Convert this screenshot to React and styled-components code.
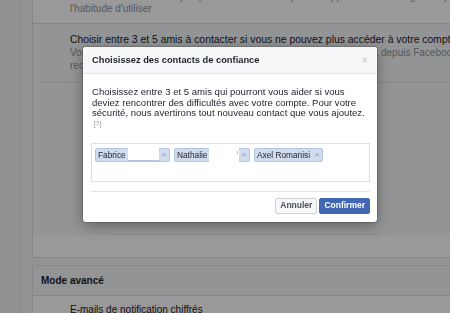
import React from "react"
import styled, { createGlobalStyle } from "styled-components"

const GlobalStyle = createGlobalStyle`
  html, body {
    margin: 0;
    padding: 0;
    width: 450px;
    height: 313px;
    overflow: hidden;
    background: #f5f6f7;
    font-family: "Liberation Sans", Arial, sans-serif;
  }
`

const Page = styled.div`
  display: flex;
  width: 450px;
  height: 313px;
  overflow: hidden;
`

const Sidebar = styled.div`
  width: 20px;
  flex: none;
  border-right: 1px solid #dddfe2;
  background: #f3f4f6;
`

const Main = styled.div`
  flex: 1;
  display: flex;
  flex-direction: column;
  gap: 7px;
  padding-left: 11px;
  min-width: 0;
`

const Card = styled.div`
  flex: none;
  background: #fff;
  border: 1px solid #dddfe2;
  border-right: none;
  border-radius: ${(p) => (p.$top ? "3px 0 0 0" : "0 0 0 3px")};
  margin-top: ${(p) => p.$offset || 0}px;
  overflow: hidden;
`

const Row = styled.div`
  padding: ${(p) => p.$pad || "2px 0 8px 37px"};
  background: ${(p) => (p.$active ? "#f6f7f9" : "#fff")};
  border-top: ${(p) => (p.$divided ? "1px solid #dddfe2" : "none")};
`

const RowText = styled.div`
  padding-left: 37px;
`

const Line = styled.div`
  white-space: nowrap;
  font-size: ${(p) => p.$size || 10}px;
  line-height: ${(p) => p.$lh || 12}px;
  color: ${(p) => (p.$muted ? "#90949c" : "#1d2129")};
`

const Divider = styled.div`
  height: 1px;
  background: #dddfe2;
  margin: ${(p) => p.$margin};
`

const CardHeader = styled.div`
  height: 29px;
  display: flex;
  align-items: center;
  padding-left: 8px;
  background: #f6f7f9;
  border-bottom: 1px solid #dddfe2;
  font-size: 10px;
  font-weight: bold;
  color: #1d2129;
`

const Overlay = styled.div`
  position: fixed;
  inset: 0;
  background: rgba(0, 0, 0, 0.4);
`

const Dialog = styled.div`
  position: absolute;
  left: 83px;
  top: 47px;
  width: 294px;
  background: #fff;
  border-radius: 3px;
  box-shadow: 0 0 0 1px rgba(0, 0, 0, 0.15), 0 3px 14px rgba(0, 0, 0, 0.35);
  overflow: hidden;
`

const DialogHeader = styled.div`
  height: 26px;
  display: flex;
  align-items: center;
  justify-content: space-between;
  padding: 0 9px;
  background: #f6f7f9;
  border-bottom: 1px solid #e5e5e5;
`

const Title = styled.div`
  font-size: 9.3px;
  font-weight: bold;
  color: #1d2129;
`

const Close = styled.span`
  font-size: 11px;
  color: #bec2c9;
  line-height: 1;
`

const Body = styled.div`
  padding: 13px 8px 0 9px;
`

const Text = styled.p`
  margin: 0;
  font-size: 9.55px;
  line-height: 10.5px;
  color: #1d2129;
  white-space: nowrap;
`

const Help = styled.div`
  font-size: 6.5px;
  line-height: 10px;
  color: #90949c;
  margin-left: 2px;
`

const TokenBox = styled.div`
  box-sizing: border-box;
  margin: 14px -1px 0 -1px;
  height: 39px;
  border: 1px solid #dddfe2;
  padding: 4px 3px;
  display: flex;
  align-items: flex-start;
  gap: 4px;
`

const Token = styled.div`
  height: 12px;
  display: flex;
  align-items: center;
  background: #d1dbee;
  border: 1px solid #b4c3df;
  border-radius: 2px;
  font-size: 8.3px;
  color: #1d2129;
`

const TokenLabel = styled.span`
  padding: 0 2px;
  width: ${(p) => (p.$w ? `${p.$w}px` : "auto")};
  box-sizing: border-box;
  white-space: nowrap;
  overflow: hidden;
`

const Ghost = styled.span`
  width: ${(p) => (p.$tall ? 30 : 31)}px;
  height: ${(p) => (p.$tall ? 17 : 12)}px;
  margin-top: ${(p) => (p.$tall ? -2 : -1)}px;
  align-self: flex-start;
  background: #fff;
  border-bottom: ${(p) => (p.$tall ? "none" : "1px solid #b4c3df")};
  position: relative;
`

const Tick = styled.span`
  position: absolute;
  right: 1px;
  top: 4px;
  width: 1px;
  height: 3px;
  background: #b8bcc4;
`

const Remove = styled.span`
  width: 10px;
  text-align: center;
  font-size: 8px;
  color: #8f9bb3;
`

const Footer = styled.div`
  margin: 9px -1px 0 -1px;
  border-top: 1px solid #e5e5e5;
  padding: 6px 0 8px;
  display: flex;
  justify-content: flex-end;
  gap: 2px;
`

const Button = styled.button`
  height: 16px;
  padding: 0 4px;
  border-radius: 2px;
  font-family: "Liberation Sans", Arial, sans-serif;
  font-size: 8.5px;
  font-weight: bold;
  line-height: 1;
  border: 1px solid ${(p) => (p.$primary ? "#4267b2" : "#ced0d4")};
  background: ${(p) => (p.$primary ? "#4267b2" : "#f6f7f9")};
  color: ${(p) => (p.$primary ? "#fff" : "#4b4f56")};
`

const contacts = [
  { name: "Fabrice", w: 32, ghost: true },
  { name: "Nathalie", w: 34, ghost: true, tall: true },
  { name: "Axel Romanisi" },
]

export default function App() {
  return (
    <>
      <GlobalStyle />
      <Page>
        <Sidebar />
        <Main>
          <Card $offset={-12}>
            <Row>
              <Line $muted>
                Nous vous avertirons si quelqu'un se connecte depuis un appareil ou un navigateur que vous n'avez pas
              </Line>
              <Line $muted>l'habitude d'utiliser</Line>
            </Row>
            <Row $active $divided $pad="9px 0 0 0">
              <RowText>
                <Line $lh={13} $size={10.4}>
                  Choisir entre 3 et 5 amis à contacter si vous ne pouvez plus accéder à votre compte
                </Line>
                <Line $muted $lh={13}>
                  Vos contacts de confiance peuvent vous envoyer un code et une URL depuis Facebook pour vous aider à vous
                </Line>
                <Line $muted $lh={13}>reconnecter.</Line>
              </RowText>
              <Divider $margin="10px 0 0 8px" />
              <Divider $margin="151px 72px 22px 82px" />
            </Row>
          </Card>
          <Card $top>
            <CardHeader>Mode avancé</CardHeader>
            <Row $pad="8px 0 8px 37px">
              <Line>E-mails de notification chiffrés</Line>
            </Row>
          </Card>
        </Main>
      </Page>
      <Overlay />
      <Dialog>
        <DialogHeader>
          <Title>Choisissez des contacts de confiance</Title>
          <Close>×</Close>
        </DialogHeader>
        <Body>
          <Text>
            Choisissez entre 3 et 5 amis qui pourront vous aider si vous
            <br />
            deviez rencontrer des difficultés avec votre compte. Pour votre
            <br />
            sécurité, nous avertirons tout nouveau contact que vous ajoutez.
          </Text>
          <Help>[?]</Help>
          <TokenBox>
            {contacts.map((c) => (
              <Token key={c.name}>
                <TokenLabel $w={c.w}>{c.name}</TokenLabel>
                {c.ghost && <Ghost $tall={c.tall}>{c.tall && <Tick />}</Ghost>}
                <Remove>×</Remove>
              </Token>
            ))}
          </TokenBox>
          <Footer>
            <Button>Annuler</Button>
            <Button $primary>Confirmer</Button>
          </Footer>
        </Body>
      </Dialog>
    </>
  )
}
